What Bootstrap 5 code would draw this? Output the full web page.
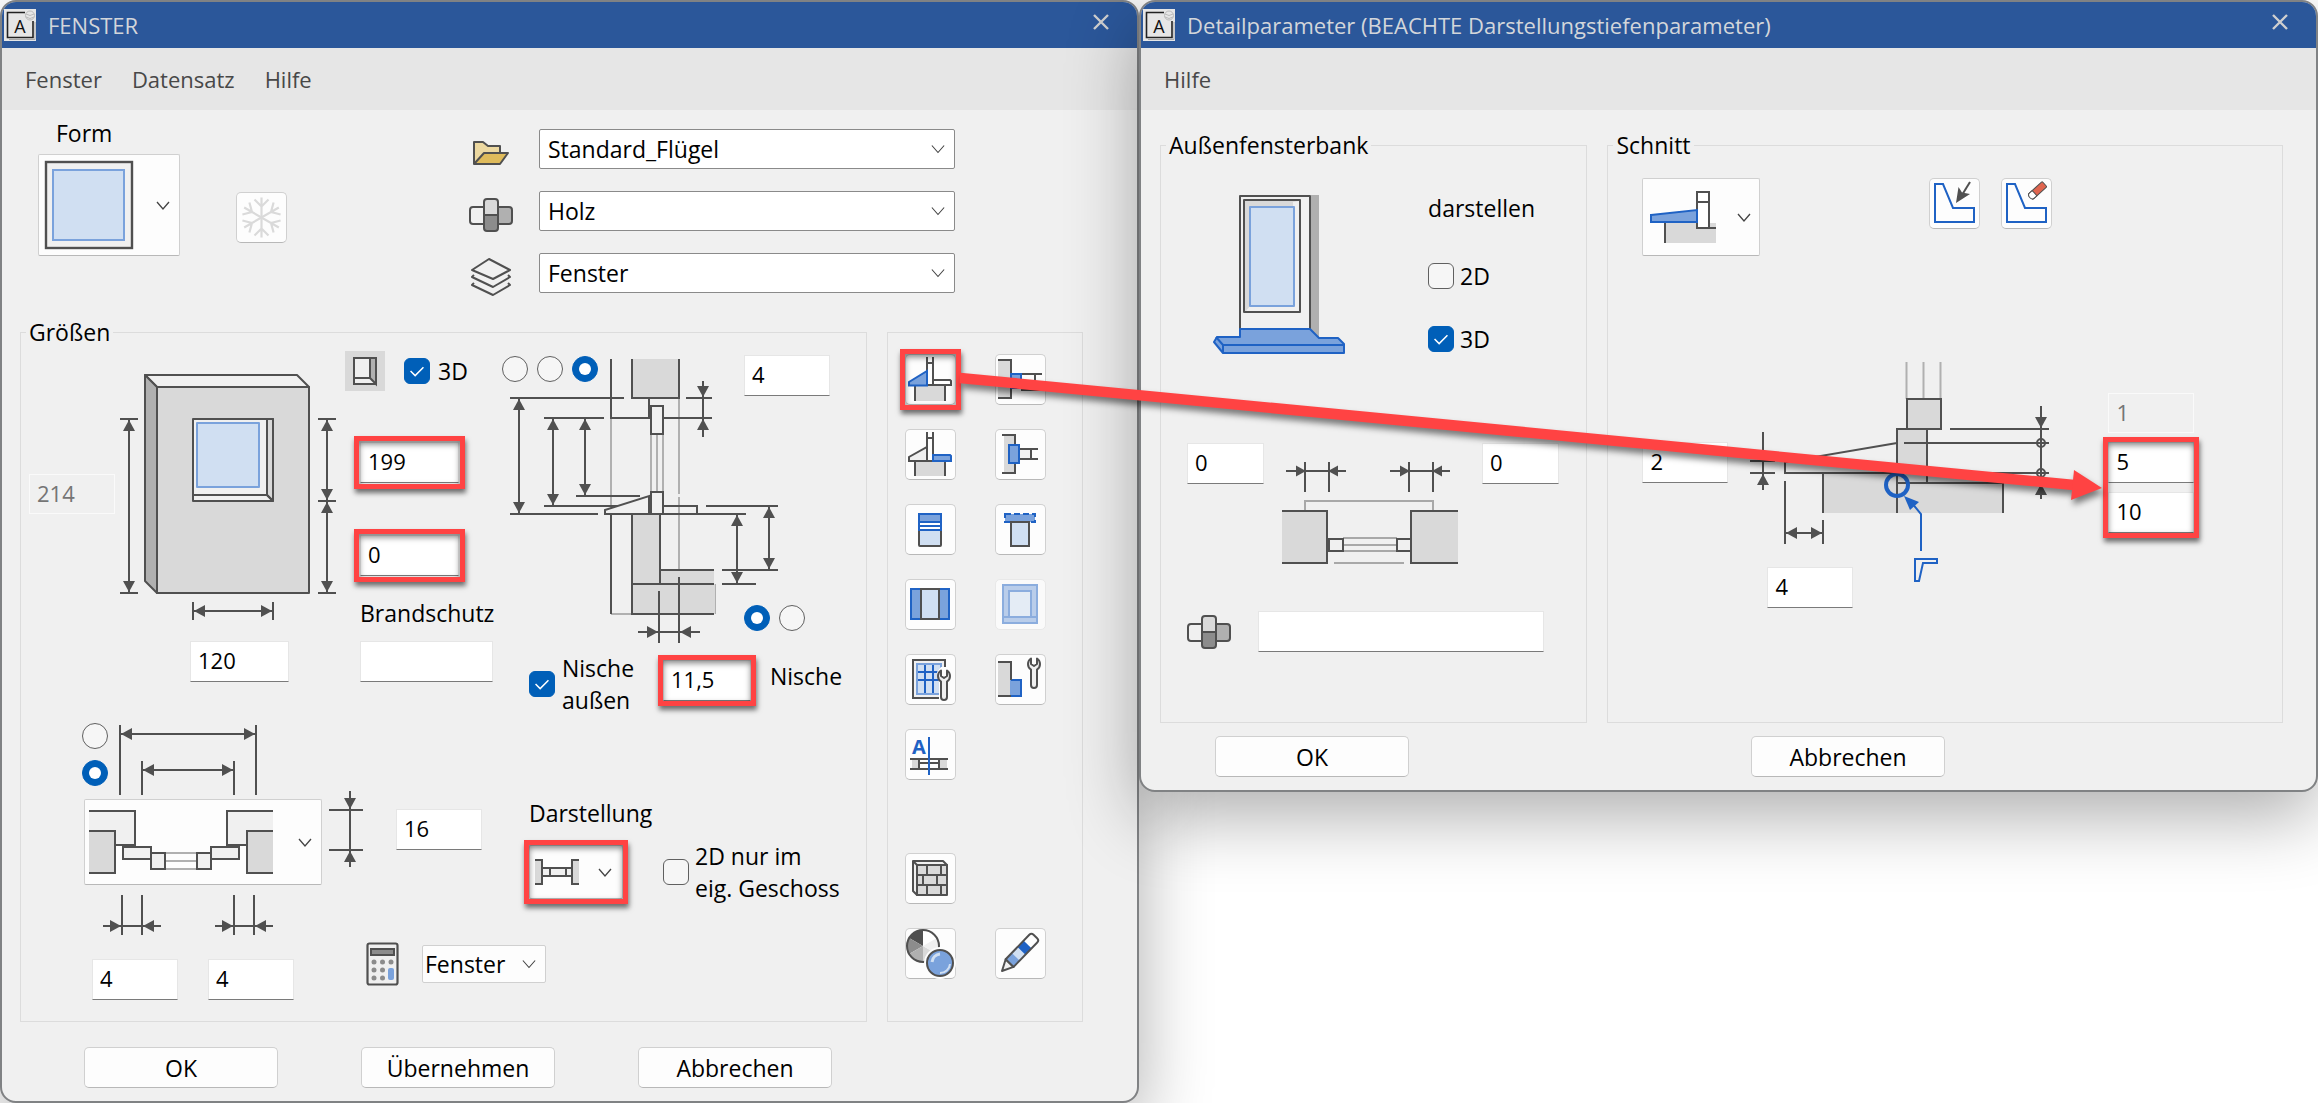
<!DOCTYPE html>
<html lang="de">
<head>
<meta charset="utf-8">
<meta name="viewport" content="width=device-width, initial-scale=1">
<title>FENSTER</title>
<link href="https://cdn.jsdelivr.net/npm/bootstrap@5.3.0/dist/css/bootstrap.min.css" rel="stylesheet">
<style>
  :root { --ink:#505050; --blue:#1f62c4; --mid:#7aa2dc; --pale:#d0dff2; --wall:#d9d9d9; --face:#f0f0f0; }
  body { font-family:"Open Sans","Noto Sans",sans-serif; font-size:23px; line-height:32px; color:#000; background:#fff; overflow:hidden; }
  svg { display:block; flex:none; overflow:visible; }

  /* dialog frames */
  .desk { position:relative; }
  .dialog { border:2px solid #808284; border-radius:16px; background:var(--face); overflow:hidden; box-shadow:0 24px 72px rgba(0,0,0,.32); }
  .dialog-main { flex:0 0 49.14%; }
  .dialog-detail { flex:1 1 0; z-index:1; position:relative; }
  .titlebar { background:#2b579a; color:#d3d6da; height:46px; font-size:22px; padding-left:2px; padding-right:23px; }
  .titlebar h1 { font-size:22px; font-weight:400; line-height:32px; margin:0 0 0 12px; }
  .closer { border:0; background:none; padding:4px 5px 10px; color:#cfcfcf; }
  .menubar { background:#e6e6e6; height:62px; font-size:22px; padding-left:23px; gap:30px; }
  .menubar a { color:#484848; text-decoration:none; }

  /* group boxes */
  .group { border:1px solid #dcdcdc; }
  .group legend { float:none; width:auto; font-size:23px; line-height:32px; margin:0 0 0 5px; padding:0 3px; }

  /* fields */
  .field { height:41px; border:1px solid #e6e6e6; border-bottom-color:#7a7a7a; border-radius:0; padding:0 7px 3px; font-size:22px; line-height:32px; color:#000; background:#fff; width:86px; flex:none; }
  .field:disabled { background:var(--face); border-color:#fafafa; color:#757575; height:40px; }
  .w-size { width:99px; } .w-fire { width:133px; } .w-niche { width:88px; } .w-over { width:77px; } .w-mat { width:286px; }
  .combo { --bs-form-select-bg-img:url("data:image/svg+xml,%3csvg xmlns='http://www.w3.org/2000/svg' viewBox='0 0 16 16'%3e%3cpath fill='none' stroke='%23444' stroke-width='1.3' d='m1 4 7 8 7-8'/%3e%3c/svg%3e"); height:40px; width:416px; border:1px solid #8a8a8a; border-radius:2px; padding:0 36px 0 8px; font-size:23px; line-height:32px; color:#000; background-color:#fff; background-size:14px; background-position:right 9px center; }
  .combo-calc { width:124px; height:38px; border-color:#d0d0d0; padding:0 24px 0 2px; background-color:#fdfdfd; }
  .form-check-input { width:26px; height:26px; margin:0; border:1px solid #606060; background-color:#f6f6f6; flex:none; }
  .form-check-input[type=checkbox] { border-radius:6px; }
  .form-check-input:checked { background-color:#005fb8; border-color:#005fb8; }
  .form-check-input:checked[type=checkbox] { background-image:url("data:image/svg+xml,%3csvg xmlns='http://www.w3.org/2000/svg' viewBox='0 0 26 26'%3e%3cpath fill='none' stroke='%23fff' stroke-width='1.6' d='m6 13 5 5 9-9'/%3e%3c/svg%3e"); }

  /* push buttons */
  .push { width:194px; height:41px; padding:0; font-size:23px; line-height:32px; background:#fdfdfd; border:1px solid #d0d0d0; border-bottom-color:#b8b8b8; border-radius:5px; color:#000; }
  .tool { width:51px; height:51px; padding:0; background:#fdfdfd; border:1px solid #d0d0d0; border-bottom-color:#b8b8b8; border-radius:5px; flex:none; }
  .tool svg { margin:-1px; }
  .tool:disabled { opacity:1; background:#fafafa; border-color:#e8e8e8; }
  .tool:disabled svg { opacity:.5; }
  .picker { background:#fdfdfd; border:1px solid #d0d0d0; border-bottom-color:#b8b8b8; border-radius:2px; padding:0; display:flex; align-items:center; justify-content:space-between; flex:none; }

  /* red call-out frames */
  .callout-frame { position:relative; display:flex; }
  .callout-frame::after { content:""; position:absolute; inset:-5px; border:5px solid #ff4343; box-shadow:1px 4px 5px rgba(0,0,0,.55), inset 0 3px 6px rgba(0,0,0,.5); pointer-events:none; }
  .callout-field::after { inset:-6px; }
  .callout-arrow { position:absolute; left:0; top:0; z-index:2; pointer-events:none; filter:drop-shadow(2px 5px 3px rgba(0,0,0,.5)); }

  /* top part of the main dialog */
  .record { padding:7px 0 23px 36px; }
  .form-label-row { padding-left:18px; margin-bottom:5px; }
  .picker-form { width:142px; height:102px; padding:0 9px 0 5px; }
  .freeze { margin:75px 182px 0 56px; }
  .record-list { gap:22px; padding-top:12px; }
  .record-row { gap:26px; height:40px; }

  .main-groups { padding:0 54px 0 18px; gap:20px; }
  .sizes-body { padding:0 8px 21px; }
  .wall-block { display:grid; grid-template-columns:86px 216px; column-gap:5px; row-gap:21px; align-content:start; align-items:center; padding-top:20px; }
  .wall-width { grid-column:2; margin-left:70px; }
  .height-block { padding-top:3px; margin-left:9px; width:157px; }
  .height-fields { padding-left:15px; }
  .height-fields .callout-frame { width:99px; margin-bottom:52px; }
  .height-head { gap:19px; margin-bottom:51px; }
  .height-fields .callout-frame + .callout-frame { margin-bottom:21px; }
  .fire-label { margin-bottom:12px; }
  .niche-block { padding-top:7px; }
  .section-view { display:grid; grid-template-columns:242px auto; grid-template-rows:auto 1fr auto; margin-bottom:8px; }
  .section-view > svg { grid-area:1/1/4/3; }
  .section-top { grid-area:1/1; gap:9px; align-self:start; padding-top:1px; }
  .section-head { grid-area:1/2; }
  .section-side { grid-area:3/2; gap:9px; padding-bottom:13px; }
  .niche-row { padding-left:27px; }
  .niche-check { width:134px; gap:7px; }
  .niche-row .niche-name { margin-left:19px; }

  .plan-row { padding:7px 0 0 53px; }
  .plan-block { width:240px; margin-right:7px; }
  .plan-head { gap:10px; margin-bottom:4px; }
  .plan-radios { gap:11px; }
  .plan-body { padding-left:2px; }
  .picker-plan { width:238px; height:86px; padding:0 9px 0 3px; }
  .plan-dims { margin:10px 0 24px 18px; }
  .plan-fields { gap:30px; padding-left:8px; }
  .depth-row { padding-top:68px; margin-bottom:38px; }
  .depth { gap:33px; height:76px; }
  .show-block { padding-top:6px; margin-left:47px; }
  .show-label { margin-bottom:11px; }
  .show-row { gap:40px; }
  .show-row .form-check-pair { gap:6px; }
  .picker-show { width:94px; height:54px; padding:0 10px 0 4px; }
  .calc-row { gap:23px; padding-left:37px; }

  .tools { width:196px; margin-top:16px; padding:21px 0 0 17px; flex:none; }
  .tool-grid { display:grid; grid-template-columns:51px 51px; gap:24px 39px; }
  .tool-grid + .tool-grid { margin-top:73px; }
  .foot { padding:25px 0 13px 82px; gap:83px; }

  /* detail dialog */
  .detail-groups { padding:19px 33px 0 19px; gap:20px; }
  .group-sill { flex:427 1 0; }
  .group-cut { flex:676 1 0; }
  .sill-body { padding:31px 0 70px 26px; }
  .sill-head { padding-left:26px; gap:83px; margin-bottom:88px; }
  .sill-checks .form-check-pair { gap:6px; }
  .sill-checks > span { margin-bottom:36px; }
  .sill-checks .form-check-pair + .form-check-pair { margin-top:31px; }
  .sill-over { gap:10px; margin-bottom:47px; }
  .sill-mat { gap:27px; }
  .cut-body { padding:17px 0 0 34px; }
  .cut-head { margin-bottom:106px; }
  .picker-cut { width:118px; height:78px; padding:0 8px 0 6px; }
  .cut-tools { margin-left:169px; gap:21px; }
  .cut-left { margin-top:80px; margin-right:15px; }
  .cut-view { display:grid; }
  .cut-view > * { grid-area:1/1; }
  .cut-view .field { align-self:end; margin-left:24px; }
  .cut-right { margin:31px 0 0 41px; gap:9px; }
  .cut-right .callout-frame { gap:9px; }
  .detail-foot { padding:13px 0 13px 74px; gap:342px; }
</style>
</head>
<body>
<svg width="0" height="0" class="position-absolute" aria-hidden="true">
  <defs>
    <marker id="tip" viewBox="0 0 11 12" refX="12" refY="6" markerWidth="11" markerHeight="12" markerUnits="userSpaceOnUse" orient="auto-start-reverse"><path d="M0 0 11 6 0 12z" fill="#505050"/></marker>
    <marker id="tipS" viewBox="0 0 11 12" refX="10" refY="6" markerWidth="10" markerHeight="12" markerUnits="userSpaceOnUse" orient="auto-start-reverse"><path d="M0 0 11 6 0 12z" fill="#505050"/></marker>
    <symbol id="appicon" viewBox="0 0 32 32"><path fill="#e6e6e6" d="M0 0h32v32H0z"/><path d="M21 3.500H3.500V28.500H29V12" fill="none" stroke="#222" stroke-width="1.600"/><path d="M5 30.500H31V13" fill="none" stroke="#aaa"/><circle cx="26" cy="6.500" r="4.500" fill="#e6e6e6" stroke="#bbb"/><path d="M22 5q4 3 8 0M22 8q4 3 8 0" fill="none" stroke="#bbb"/></symbol>
    <symbol id="cubes" viewBox="0 0 44 34"><g stroke="#505050" stroke-width="2"><rect x="1" y="9" width="18" height="17" rx="3" fill="#f0f0f0"/><rect x="25" y="9" width="18" height="17" rx="3" fill="#b0b0b0"/><path d="M15 17V4a3 3 0 0 1 3-3h8a3 3 0 0 1 3 3v13z" fill="#d9d9d9"/><path d="M15 17v13a3 3 0 0 0 3 3h8a3 3 0 0 0 3-3V17z" fill="#8c8c8c"/></g></symbol>
    <symbol id="chev" viewBox="0 0 14 9"><path d="m1 1 6 7 6-7" fill="none" stroke="#444" stroke-width="1.300"/></symbol>
    <symbol id="wrench" viewBox="0 0 14 33"><path d="M4 1.500C0 4 0 10 4 12.500V28a3 3 0 0 0 6 0V12.500C14 10 14 4 10 1.500V7L7 9 4 7z" fill="#f0f0f0" stroke="#505050" stroke-width="2" stroke-linejoin="round"/></symbol>
  </defs>
</svg>

<div class="desk d-flex align-items-start">
  <main class="dialog dialog-main">
    <header class="titlebar d-flex align-items-center">
      <svg width="32" height="32" aria-hidden="true"><use href="#appicon"/><text x="16" y="24" text-anchor="middle" font-family="Open Sans,sans-serif" font-size="18" fill="#111">A</text></svg>
      <h1>FENSTER</h1>
      <button class="closer ms-auto" type="button" aria-label="Schließen"><svg width="16" height="16" viewBox="0 0 16 16"><path d="m1 1 14 14M15 1 1 15" stroke="currentColor" stroke-width="2.400"/></svg></button>
    </header>
    <nav class="menubar d-flex align-items-center"><a href="#">Fenster</a><a href="#">Datensatz</a><a href="#">Hilfe</a></nav>

    <div class="record d-flex align-items-start">
      <div>
        <div class="form-label-row">Form</div>
        <button type="button" class="picker picker-form" aria-label="Form">
          <svg width="90" height="90" viewBox="0 0 90 90"><rect x="2" y="2" width="86" height="86" fill="#f0f0f0" stroke="#505050" stroke-width="2.400"/><rect x="9" y="10" width="71" height="70" fill="#d0dff2" stroke="#7aa2dc" stroke-width="2"/></svg>
          <svg width="14" height="9"><use href="#chev"/></svg>
        </button>
      </div>
      <button type="button" class="tool freeze" aria-label="Einfrieren">
        <svg width="51" height="51" viewBox="-25.500 -25.500 51 51" fill="none" stroke="#dadada" stroke-width="2.200"><g id="flake"><path d="M0-20V20M-7-18 0-11 7-18M-7 18 0 11 7 18"/></g><use href="#flake" transform="rotate(60)"/><use href="#flake" transform="rotate(120)"/></svg>
      </button>
      <div class="record-list d-flex flex-column">
        <div class="record-row d-flex align-items-center">
          <svg class="mt-2" width="44" height="34" viewBox="0 0 44 34"><g stroke="#505050" stroke-width="2" stroke-linejoin="round"><path d="M5 28V6h9l5 4h12v8" fill="#ecd8a0"/><path d="M5 28 15 17H39L31 28z" fill="#dfbb5c"/></g></svg>
          <select class="form-select combo" aria-label="Datensatz"><option>Standard_Flügel</option></select>
        </div>
        <div class="record-row d-flex align-items-center">
          <svg class="mt-2" width="44" height="34"><use href="#cubes"/></svg>
          <select class="form-select combo" aria-label="Material"><option>Holz</option></select>
        </div>
        <div class="record-row d-flex align-items-center">
          <svg class="mt-2" width="44" height="38" viewBox="0 0 44 38" fill="none" stroke="#505050" stroke-width="2" stroke-linejoin="round"><path d="M20 1 41 12 24 21 3 12z"/><path d="M5 17l-2 2 21 10 17-10-2-2M5 25l-2 2 21 10 17-10-2-2"/></svg>
          <select class="form-select combo" aria-label="Layer"><option>Fenster</option></select>
        </div>
      </div>
    </div>

    <div class="main-groups d-flex align-items-stretch">
      <fieldset class="group flex-grow-1">
        <legend>Größen</legend>
        <div class="sizes-body">
          <div class="d-flex align-items-start">
            <div class="wall-block">
              <input class="form-control field" aria-label="Gesamthöhe" value="214" disabled>
              <svg width="216" height="252" viewBox="120 369 216 252" fill="none" stroke="#505050" stroke-width="2" stroke-linejoin="round">
                <path d="M145 376H297L309 388H157z" fill="#f0f0f0"/><path d="M145 376 157 388V594L145 582z" fill="#b0b0b0"/><path d="M157 388H309V594H157z" fill="#d9d9d9"/>
                <path d="M193 420H273V502H193z" fill="#f0f0f0"/><path d="M267 420H273V502L267 496z" fill="#d9d9d9"/><path d="M193 496H267L273 502"/>
                <path d="M197 424H259V488H197z" fill="#d0dff2" stroke="#7aa2dc"/>
                <path d="M120 420H138M120 594H138M318 420H336M318 502H336M318 594H336M193 603V621M273 603V621"/>
                <g marker-start="url(#tip)" marker-end="url(#tip)"><path d="M129 420V594"/><path d="M327 420V502"/><path d="M327 502V594"/><path d="M193 612H273"/></g>
              </svg>
              <input class="form-control field w-size wall-width" aria-label="Breite" value="120">
            </div>

            <div class="height-block">
              <div class="height-head d-flex align-items-center">
                <svg width="40" height="40" viewBox="345 352 40 40" stroke="#505050" stroke-width="2"><path d="M345 352h40v40h-40z" fill="#d9d9d9" stroke="none"/><path d="M354 359H376V385H354z" fill="#f0f0f0"/><path d="M370 359H376V385L370 379z" fill="#b0b0b0"/><path d="M354 379H370" /></svg>
                <div class="d-flex align-items-center gap-2"><input class="form-check-input" type="checkbox" id="wall3d" checked><label for="wall3d">3D</label></div>
              </div>
              <div class="height-fields">
                <div class="callout-frame callout-field"><input class="form-control field w-size" aria-label="Höhe" value="199"></div>
                <div class="callout-frame callout-field"><input class="form-control field w-size" aria-label="Brüstung" value="0"></div>
                <label class="fire-label d-block" for="fire">Brandschutz</label>
                <input class="form-control field w-fire" id="fire">
              </div>
            </div>

            <div class="niche-block">
              <div class="section-view">
                <svg width="288" height="289" viewBox="502 356 288 289" fill="none" stroke="#505050" stroke-width="2">
                  <g stroke="#b0b0b0"><path d="M611 419V510M651 435V493M657 435V493M663 435V493M679 399V495M679 498V571M611 615H631M715 585V615"/></g>
                  <g fill="#d9d9d9" stroke="none"><path d="M632 360h47v39h-47zM632 515h28v70h-28zM660 571h54v14h-54zM632 585h83v30h-83z"/></g>
                  <path d="M632 360V399H679V360M611 360V419H650M611 515V615M649 399V419M663 419H712M510 399H624M686 399H712M544 419H604"/>
                  <path d="M651 407H663V435H651z"/><path d="M651 493H663V515H651z"/>
                  <path d="M649 515V497L605 511V515H746M663 507H697V515M576 497H640M544 507H618M510 515H598M706 507H778M722 571H778M722 585H756"/>
                  <path d="M632 515V615H714M632 585H714M660 515V585M660 571H714M659 592V644M679 578V644M659 633H679M703 399V419"/>
                  <g marker-start="url(#tip)" marker-end="url(#tip)"><path d="M519 399V515"/><path d="M553 419V507"/><path d="M585 419V497"/><path d="M737 515V585"/><path d="M769 507V571"/></g>
                  <g marker-end="url(#tip)"><path d="M703 382V399"/><path d="M703 438V419"/><path d="M638 633H659"/><path d="M700 633H679"/></g>
                </svg>
                <div class="section-top d-flex">
                  <input class="form-check-input" type="radio" name="ref" aria-label="Bezug 1"><input class="form-check-input" type="radio" name="ref" aria-label="Bezug 2"><input class="form-check-input" type="radio" name="ref" aria-label="Bezug 3" checked>
                </div>
                <div class="section-head"><input class="form-control field" aria-label="Anschlag oben" value="4"></div>
                <div class="section-side d-flex">
                  <input class="form-check-input" type="radio" name="floor" aria-label="Rohfußboden" checked><input class="form-check-input" type="radio" name="floor" aria-label="Fertigfußboden">
                </div>
              </div>
              <div class="niche-row d-flex align-items-start">
                <div class="niche-check d-flex align-items-center"><input class="form-check-input" type="checkbox" id="nicheOut" checked><label for="nicheOut">Nische<br>außen</label></div>
                <div class="callout-frame mt-2"><input class="form-control field w-niche" id="niche" value="11,5"></div>
                <label class="niche-name mt-2" for="niche">Nische</label>
              </div>
            </div>
          </div>

          <div class="plan-row d-flex align-items-start">
            <div class="plan-block">
              <div class="plan-head d-flex">
                <div class="plan-radios d-flex flex-column"><input class="form-check-input" type="radio" name="wide" aria-label="Rohbaubreite"><input class="form-check-input" type="radio" name="wide" aria-label="Lichte Breite" checked></div>
                <svg width="142" height="72" viewBox="118 724 142 72" fill="none" stroke="#505050" stroke-width="2"><path d="M120 726V796M256 726V796M142 762V796M234 762V796"/><g marker-start="url(#tip)" marker-end="url(#tip)"><path d="M120 735H256"/><path d="M142 771H234"/></g></svg>
              </div>
              <div class="plan-body">
                <button type="button" class="picker picker-plan" aria-label="Anschlagart">
                  <svg width="186" height="66" viewBox="89 812 186 66" fill="none" stroke="#505050" stroke-width="2">
                    <g fill="#f0f0f0" stroke="none"><path d="M90 814h46v34H90zM228 814h46v34h-46z"/></g>
                    <g fill="#d9d9d9" stroke="none"><path d="M90 834h26v42H90zM248 834h26v42h-26z"/></g>
                    <path d="M90 814H136V848H116M274 814H228V848H248M90 834H116V876H90M274 834H248V876H274"/>
                    <path d="M166 856H198M166 864H198M166 872H198" stroke="#b0b0b0"/>
                    <g fill="#f0f0f0"><path d="M124 850H152V862H124zM212 850H240V862H212zM152 856H166V872H152zM198 856H212V872H198z"/></g>
                  </svg>
                  <svg width="14" height="9"><use href="#chev"/></svg>
                </button>
                <svg class="plan-dims" width="172" height="40" viewBox="102 896 172 40" fill="none" stroke="#505050" stroke-width="2"><path d="M122 896V936M142 896V936M234 896V936M254 896V936M122 927H142M234 927H254"/><g marker-end="url(#tip)"><path d="M103 927H122"/><path d="M161 927H142"/><path d="M215 927H234"/><path d="M273 927H254"/></g></svg>
                <div class="plan-fields d-flex"><input class="form-control field" aria-label="Anschlag links" value="4"><input class="form-control field" aria-label="Anschlag rechts" value="4"></div>
              </div>
            </div>
            <div>
              <div class="depth-row d-flex align-items-start">
                <div class="depth d-flex align-items-center">
                  <svg width="34" height="76" viewBox="329 792 34 76" fill="none" stroke="#505050" stroke-width="2"><path d="M329 811H363M329 851H363M350 811V851"/><g marker-end="url(#tip)"><path d="M350 792V811"/><path d="M350 868V851"/></g></svg>
                  <input class="form-control field" aria-label="Anschlagtiefe" value="16">
                </div>
                <div class="show-block">
                  <div class="show-label">Darstellung</div>
                  <div class="show-row d-flex align-items-center">
                    <div class="callout-frame"><button type="button" class="picker picker-show" aria-label="Darstellung">
                      <svg width="46" height="28" viewBox="533 859 46 28" fill="none" stroke="#505050" stroke-width="2"><path d="M534 861h7v24h-7zM571 861h7v24h-7z" fill="#d9d9d9" stroke="none"/><path d="M541 869H571V877H541z" fill="#f0f0f0"/><path d="M534 861H541V885H534M578 861H571V885H578M549 869V877M565 869V877"/></svg>
                      <svg width="14" height="9"><use href="#chev"/></svg>
                    </button></div>
                    <div class="form-check-pair d-flex align-items-center"><input class="form-check-input" type="checkbox" id="only2d"><label for="only2d">2D nur im<br>eig. Geschoss</label></div>
                  </div>
                </div>
              </div>
              <div class="calc-row d-flex align-items-center">
                <svg width="33" height="44" viewBox="0 0 33 44"><rect x="1.500" y="1.500" width="30" height="41" rx="2" fill="#f0f0f0" stroke="#505050" stroke-width="2.200"/><path d="M5 7H28V13H5z" fill="#8c8c8c" stroke="#505050" stroke-width="2"/><g fill="#8c8c8c"><circle cx="8" cy="20" r="2.500"/><circle cx="16.500" cy="20" r="2.500"/><circle cx="25" cy="20" r="2.500"/><circle cx="8" cy="28" r="2.500"/><circle cx="16.500" cy="28" r="2.500"/><circle cx="8" cy="36" r="2.500"/><circle cx="16.500" cy="36" r="2.500"/></g><rect x="22" y="26" width="6" height="12" rx="2" fill="#7aa2dc"/></svg>
                <select class="form-select combo combo-calc" aria-label="Auswertung"><option>Fenster</option></select>
              </div>
            </div>
          </div>
        </div>
      </fieldset>

      <div class="group tools">
        <div class="tool-grid">
          <div class="callout-frame"><button type="button" class="tool" aria-label="Außenfensterbank"><svg width="51" height="51" viewBox="0 0 51 51" stroke="#505050" stroke-width="2" fill="none"><path d="M10 32h30v15H10z" fill="#d9d9d9" stroke="none"/><path d="M10 32V47M40 32V47M22 3V31M28 3V31M22 9H28M22 31H29"/><path d="M28 26H45L46 27V31H28z" fill="#fff"/><path d="M22 17V31.500H4V28z" fill="#7aa2dc" stroke="#1f62c4"/></svg></button></div>
          <button type="button" class="tool" aria-label="Rollladenkasten"><svg width="51" height="51" viewBox="0 0 51 51" stroke="#505050" stroke-width="2" fill="none"><path d="M3 6h13v38H3z" fill="#d9d9d9" stroke="none"/><path d="M3 6H16V44H3M26 20H47M26 36H47M40 20V36"/><path d="M16 20H26V34H16z" fill="#7aa2dc" stroke="#1f62c4"/></svg></button>
          <button type="button" class="tool" aria-label="Innenfensterbank"><svg width="51" height="51" viewBox="0 0 51 51" stroke="#505050" stroke-width="2" fill="none"><path d="M10 32h30v15H10z" fill="#d9d9d9" stroke="none"/><path d="M10 32V47M40 32V47M22 3V31M28 3V31M22 9H28M22 32H29"/><path d="M22 18V32H4V28z" fill="#f0f0f0"/><path d="M28 26H45L46 27V32H28z" fill="#7aa2dc" stroke="#1f62c4"/></svg></button>
          <button type="button" class="tool" aria-label="Zarge"><svg width="51" height="51" viewBox="0 0 51 51" stroke="#505050" stroke-width="2" fill="none"><path d="M9 6h11v38H9z" fill="#d9d9d9" stroke="none"/><path d="M24 20h12v10H24z" fill="#f0f0f0" stroke="none"/><path d="M7 6H20V44H7M24 20H43M24 30H43M36 20V30"/><path d="M14 16H24V34H14z" fill="#7aa2dc" stroke="#1f62c4"/></svg></button>
          <button type="button" class="tool" aria-label="Rollladen"><svg width="51" height="51" viewBox="0 0 51 51" stroke-width="2" fill="none"><rect x="14" y="24" width="22" height="18" rx="1" fill="#d0dff2" stroke="#505050"/><path d="M14 10H36V18H14z" fill="#7aa2dc"/><path d="M14 18H36V26H14z" fill="#fff"/><path d="M14 10H36V26H14zM14 18H36M14 22H36" stroke="#1f62c4"/></svg></button>
          <button type="button" class="tool" aria-label="Markise"><svg width="51" height="51" viewBox="0 0 51 51" stroke-width="2" fill="none"><path d="M10 10H40V18H10z" fill="#7aa2dc" stroke="#1f62c4" stroke-dasharray="6 3"/><rect x="16" y="18" width="18" height="24" fill="#d0dff2" stroke="#505050"/></svg></button>
          <button type="button" class="tool" aria-label="Fensterladen"><svg width="51" height="51" viewBox="0 0 51 51" stroke-width="2" fill="none"><path d="M6 10H44V40H6z" fill="#7aa2dc" stroke="#1f62c4"/><path d="M16 10H34V40H16z" fill="#d0dff2" stroke="#505050"/></svg></button>
          <button type="button" class="tool" aria-label="Umrahmung" disabled><svg width="51" height="51" viewBox="0 0 51 51" stroke="#1f62c4" stroke-width="2" fill="none"><path d="M8 6H42V44H8z" fill="#7aa2dc"/><path d="M14 12H36V38H14z" fill="#d0dff2"/><path d="M8 38H42"/></svg></button>
          <button type="button" class="tool" aria-label="Sprossen"><svg width="51" height="51" viewBox="0 0 51 51" stroke-width="2" fill="none"><path d="M8 6H40V44H8z" fill="#f0f0f0" stroke="#505050"/><path d="M12 10H36V40H12z" fill="#d0dff2" stroke="#7aa2dc"/><path d="M20 11V39M28 11V39M13 18H35M13 26H35" stroke="#1f62c4"/><path d="M32 18l4-5h8l4 6-4 8v20H34V28z" fill="#fdfdfd"/><use href="#wrench" x="32" y="15" width="14" height="33"/></svg></button>
          <button type="button" class="tool" aria-label="Anschluss"><svg width="51" height="51" viewBox="0 0 51 51" stroke-width="2" fill="none"><path d="M3 8h13v35H3z" fill="#d9d9d9"/><path d="M15 26H26V42H15z" fill="#7aa2dc"/><path d="M16 26H26V42H16" stroke="#1f62c4"/><path d="M3 8H16V26M3 42H16" stroke="#505050"/><use href="#wrench" x="32" y="3" width="14" height="33"/></svg></button>
          <button type="button" class="tool" aria-label="Beschriftung"><svg width="51" height="51" viewBox="0 0 51 51" stroke-width="2" fill="none"><path d="M7 30h8v10H7zM34 30h8v10h-8z" fill="#d9d9d9"/><path d="M5 30H43M5 40H43M14 30V40M34 30V40M14 34H34" stroke="#505050"/><path d="M24 8V46" stroke="#1f62c4"/><text x="14" y="25" text-anchor="middle" font-family="Open Sans,sans-serif" font-weight="700" font-size="20" fill="#1f62c4">A</text></svg></button>
        </div>
        <div class="tool-grid">
          <button type="button" class="tool" aria-label="Mauerwerk"><svg width="51" height="51" viewBox="0 0 51 51" stroke="#505050" stroke-width="2" stroke-linejoin="round"><path d="M8 8H38L42 12H12V42L8 38z" fill="#f0f0f0"/><path d="M8 8l4 4"/><path d="M12 12H42V42H12z" fill="#d9d9d9"/><path fill="none" d="M12 22H42M12 32H42M22 12V22M36 12V22M18 22V32M32 22V32M22 32V42M36 32V42"/></svg></button>
          <span></span>
          <button type="button" class="tool" aria-label="Oberflächen"><svg width="51" height="51" viewBox="0 0 51 51"><g transform="translate(18 18)"><circle r="16" fill="#fff"/><path d="M0 0V-16A16 16 0 0 0-13.900-8z" fill="#505050"/><path d="M0 0-13.900-8A16 16 0 0 0-13.900 8z" fill="#8c8c8c"/><path d="M0 0-13.900 8A16 16 0 0 0 0 16z" fill="#b0b0b0"/><path d="M0 0V16A16 16 0 0 0 13.900 8z" fill="#d9d9d9"/><path d="M0 0 13.900 8A16 16 0 0 0 13.900-8z" fill="#f0f0f0"/><circle r="16" fill="none" stroke="#505050" stroke-width="2"/></g><circle cx="35" cy="35" r="16" fill="#fdfdfd"/><circle cx="35" cy="35" r="13" fill="#7aa2dc" stroke="#505050" stroke-width="2"/><path d="M27 34a9 9 0 0 1 8-8" fill="none" stroke="#d0dff2" stroke-width="3"/><path d="M45 36a10 10 0 0 1-10 9" fill="none" stroke="#d0dff2" stroke-width="2"/></svg></button>
          <button type="button" class="tool" aria-label="Stift"><svg width="51" height="51" viewBox="0 0 51 51"><g transform="translate(7 43) rotate(-46)" stroke-linejoin="round"><path d="M0 0 11-5.500V5.500z" fill="#f0f0f0" stroke="#505050" stroke-width="2"/><path d="M11-5.500h9v11h-9z" fill="#7aa2dc"/><path d="M20-5.500h8v11h-8z" fill="#d0dff2"/><path d="M28-5.500h9v11h-9z" fill="#1f62c4"/><path d="M37-5.500h8v11h-8z" fill="#fff"/><path d="M11-5.500H45a3 3 0 0 1 3 3v5a3 3 0 0 1-3 3H11z" fill="none" stroke="#505050" stroke-width="2"/></g></svg></button>
        </div>
      </div>
    </div>

    <footer class="foot d-flex">
      <button type="button" class="btn push">OK</button><button type="button" class="btn push">Übernehmen</button><button type="button" class="btn push">Abbrechen</button>
    </footer>
  </main>

  <section class="dialog dialog-detail">
    <header class="titlebar d-flex align-items-center">
      <svg width="32" height="32" aria-hidden="true"><use href="#appicon"/><text x="16" y="24" text-anchor="middle" font-family="Open Sans,sans-serif" font-size="18" fill="#111">A</text></svg>
      <h1>Detailparameter (BEACHTE Darstellungstiefenparameter)</h1>
      <button class="closer ms-auto" type="button" aria-label="Schließen"><svg width="16" height="16" viewBox="0 0 16 16"><path d="m1 1 14 14M15 1 1 15" stroke="currentColor" stroke-width="2.400"/></svg></button>
    </header>
    <nav class="menubar d-flex align-items-center"><a href="#">Hilfe</a></nav>

    <div class="detail-groups d-flex align-items-stretch">
      <fieldset class="group group-sill">
        <legend>Außenfensterbank</legend>
        <div class="sill-body">
          <div class="sill-head d-flex align-items-start">
            <svg width="132" height="162" viewBox="1213 193 132 162" stroke-width="2" stroke-linejoin="round" fill="none">
              <path d="M1311 196H1319V340L1311 330z" fill="#b0b0b0"/>
              <path d="M1240 197H1310V330H1240z" fill="#f0f0f0" stroke="#505050"/><path d="M1244 201H1300V313H1244z" fill="#d9d9d9" stroke="#505050"/><path d="M1246 312 1250 307H1295L1293 203 1299 202V312z" fill="#f0f0f0"/>
              <path d="M1250 208H1294V307H1250z" fill="#d0dff2" stroke="#7aa2dc"/>
              <path d="M1240 330H1310L1319 339H1338L1344 345V354H1223L1214 343 1217 338H1240z" fill="#7aa2dc" stroke="#1f62c4"/><path d="M1216 338 1223 346H1344M1223 346V354" stroke="#1f62c4"/>
            </svg>
            <div class="sill-checks d-flex flex-column">
              <span>darstellen</span>
              <div class="form-check-pair d-flex align-items-center"><input class="form-check-input" type="checkbox" id="s2d"><label for="s2d">2D</label></div>
              <div class="form-check-pair d-flex align-items-center"><input class="form-check-input" type="checkbox" id="s3d" checked><label for="s3d">3D</label></div>
            </div>
          </div>
          <div class="sill-over d-flex align-items-start">
            <input class="form-control field w-over" aria-label="Überstand links" value="0">
            <svg width="198" height="121" viewBox="1274 443 198 121" fill="none" stroke="#505050" stroke-width="2">
              <path d="M1282 511h45v52h-45zM1411 511h47v52h-47z" fill="#d9d9d9" stroke="none"/>
              <path d="M1305 510V501H1433V510M1343 538H1397M1343 545H1397M1343 551H1397M1334 563H1404" stroke="#a8a8a8"/>
              <path d="M1282 511H1327V563H1282M1458 511H1411V563H1458M1305 462V492M1329 462V492M1409 462V492M1433 462V492M1305 471H1329M1409 471H1433"/>
              <path d="M1329 539H1343V551H1329zM1397 539H1411V551H1397z" fill="#f0f0f0"/>
              <g marker-end="url(#tipS)"><path d="M1286 471H1305"/><path d="M1346 471H1329"/><path d="M1390 471H1409"/><path d="M1450 471H1433"/></g>
            </svg>
            <input class="form-control field w-over" aria-label="Überstand rechts" value="0">
          </div>
          <div class="sill-mat d-flex align-items-center">
            <svg width="44" height="34"><use href="#cubes"/></svg>
            <input class="form-control field w-mat" aria-label="Material">
          </div>
        </div>
      </fieldset>

      <fieldset class="group group-cut">
        <legend>Schnitt</legend>
        <div class="cut-body">
          <div class="cut-head d-flex align-items-start">
            <button type="button" class="picker picker-cut" aria-label="Schnittform">
              <svg width="68" height="56" viewBox="1648 190 68 56" fill="none" stroke="#505050" stroke-width="2"><path d="M1664 224h51v20h-51z" fill="#d9d9d9" stroke="none"/><path d="M1664 223V244M1696 229H1715"/><path d="M1696 193H1708V229H1696zM1696 203H1708" fill="#fff"/><path d="M1650 216 1696 211V223H1650z" fill="#7aa2dc" stroke="#1f62c4"/></svg>
              <svg width="14" height="9"><use href="#chev"/></svg>
            </button>
            <div class="cut-tools d-flex">
              <button type="button" class="tool" aria-label="Kontur wählen"><svg width="51" height="51" viewBox="0 0 51 51" fill="none"><path d="M6 6H14L24 30H45V44H6z" stroke="#1f62c4" stroke-width="2"/><path d="M41 4 33 17" stroke="#505050" stroke-width="2"/><path d="M27 25 29.500 9 33 14.500 41 16z" fill="#505050"/></svg></button>
              <button type="button" class="tool" aria-label="Kontur löschen"><svg width="51" height="51" viewBox="0 0 51 51" fill="none"><path d="M6 6H14L24 30H45V44H6z" stroke="#1f62c4" stroke-width="2"/><g transform="translate(36.500 12.500) rotate(-42)" stroke="#505050"><rect x="-9.500" y="-3.500" width="19" height="7" rx="1" fill="#e0654f"/><path d="M-4-3.500h-3.500a3 3.500 0 0 0 0 7H-4z" fill="#fff"/></g></svg></button>
            </div>
          </div>
          <div class="d-flex align-items-start">
            <div class="cut-left"><input class="form-control field" aria-label="Stärke" value="2"></div>
            <div class="cut-view">
              <svg width="324" height="246" viewBox="1744 363 324 246" fill="none" stroke="#505050" stroke-width="2">
                <path d="M1907.500 363V400M1924.500 363V400M1941.500 363V400" stroke="#b0b0b0"/>
                <g fill="#d9d9d9" stroke="none"><path d="M1824 475h180v39h-180zM1898 430h30v54h-30z"/></g>
                <path d="M1908 400H1942V430H1908z" fill="#d9d9d9"/>
                <path d="M1898 514V430H1942M1928 430V484M1898 484H2004V514M1824 474V514M1898 444 1786 463V474H2050M1905 444H2050M1951 430H2050M1751 462H1776M1751 474H1776M1764 433V474"/>
                <path d="M1786 482V545M1824 521V545M2042 407V484M2013 484H2050"/>
                <g><circle cx="2042" cy="444" r="4"/><circle cx="2042" cy="474" r="4"/></g>
                <path d="M1786 534H1824" marker-start="url(#tip)" marker-end="url(#tip)"/>
                <g marker-end="url(#tip)"><path d="M2042 407V430"/><path d="M2042 500V484"/><path d="M1764 491V474"/></g>
                <g stroke="#1f62c4"><circle cx="1898" cy="486" r="11" stroke-width="4"/><path d="M1912 503 1922 515V552"/><path d="M1905 497 1920 503 1911 511z" fill="#1f62c4" stroke="none"/><path d="M1916 560H1938V564H1924L1920 582H1916z"/></g>
              </svg>
              <input class="form-control field" aria-label="Überstand" value="4">
            </div>
            <div class="cut-right d-flex flex-column">
              <input class="form-control field" aria-label="Höhe gesamt" value="1" disabled>
              <div class="callout-frame d-flex flex-column"><input class="form-control field" aria-label="Höhe Fensterbank" value="5"><input class="form-control field" aria-label="Tiefe Fensterbank" value="10"></div>
            </div>
          </div>
        </div>
      </fieldset>
    </div>

    <footer class="detail-foot d-flex">
      <button type="button" class="btn push">OK</button><button type="button" class="btn push">Abbrechen</button>
    </footer>
  </section>

  <svg class="callout-arrow" width="2318" height="600" viewBox="0 0 2318 600" aria-hidden="true"><path d="M960 378 2074 485" stroke="#ff4343" stroke-width="10.500"/><path d="M2102 488 2071 500 2074 470z" fill="#ff4343"/></svg>
</div>
<script src="https://cdn.jsdelivr.net/npm/bootstrap@5.3.0/dist/js/bootstrap.bundle.min.js"></script>
</body>
</html>
